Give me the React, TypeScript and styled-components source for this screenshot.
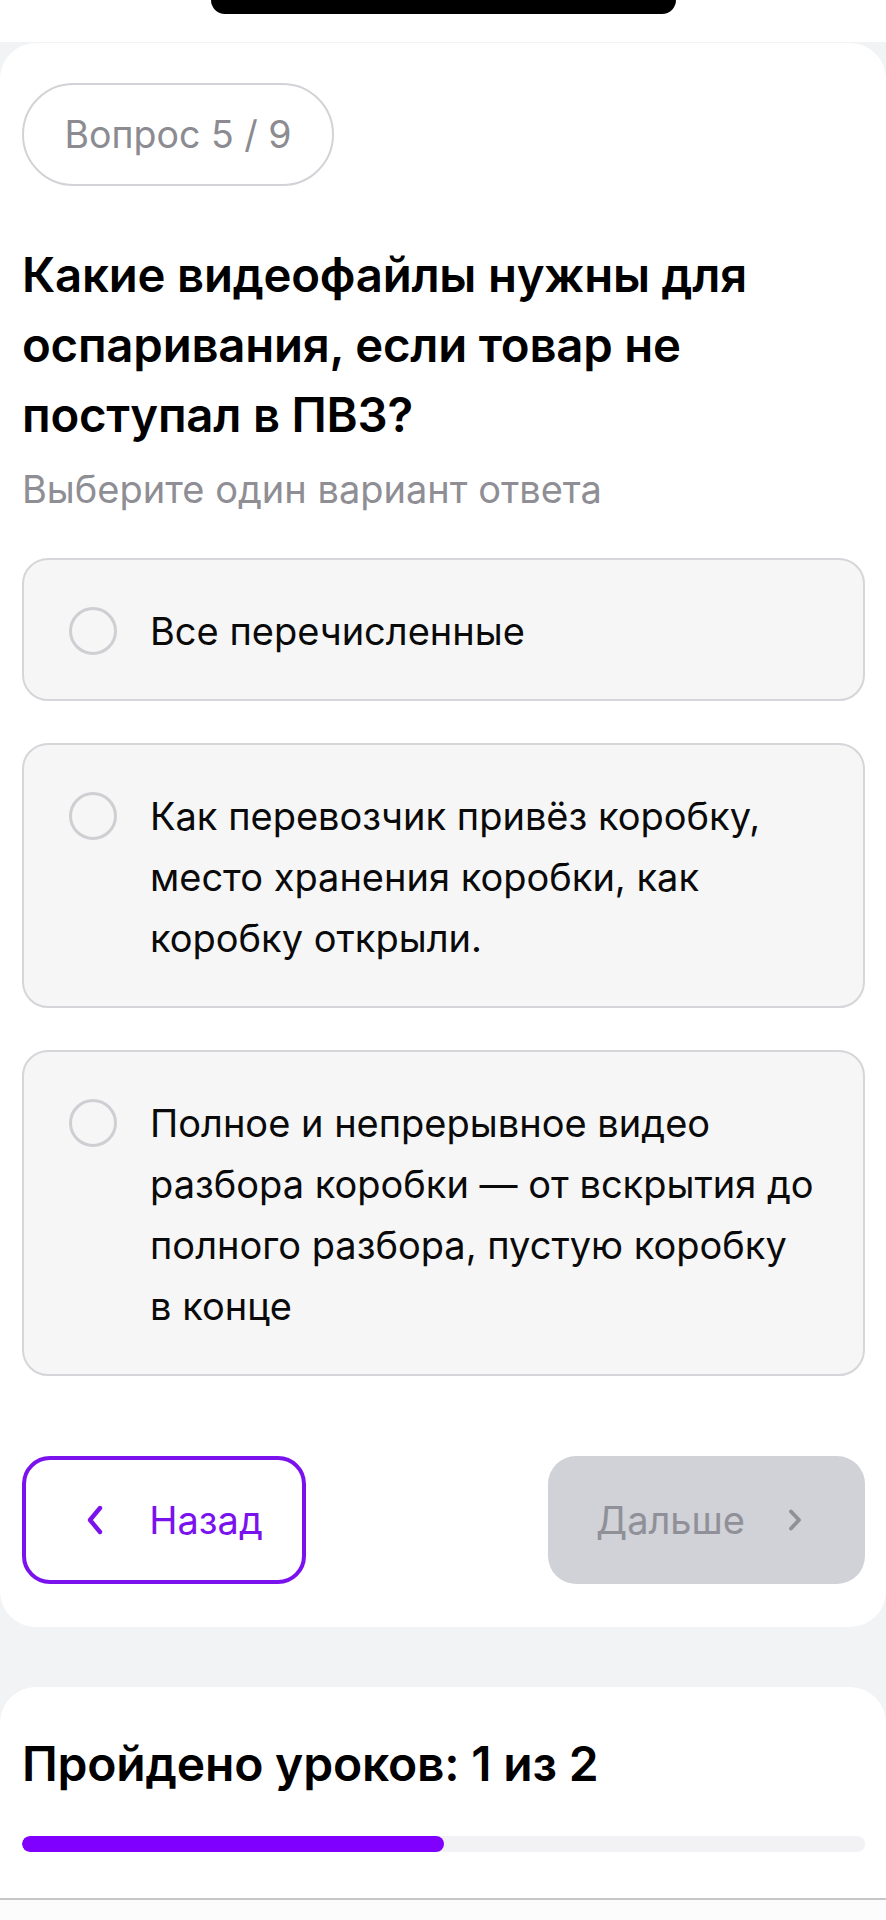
import React from 'react'
import { styled, createGlobalStyle } from 'styled-components'

const GlobalStyle = createGlobalStyle`
  html, body {
    margin: 0;
    padding: 0;
    background: #fcfcfd;
    font-family: Inter, "Noto Sans", "Liberation Sans", sans-serif;
    color: #000;
  }
  * { box-sizing: border-box; }
`

type Option = { id: number; lines: string[] }

const options: Option[] = [
  { id: 1, lines: ['Все перечисленные'] },
  { id: 2, lines: ['Как перевозчик привёз коробку,', 'место хранения коробки, как', 'коробку открыли.'] },
  {
    id: 3,
    lines: [
      'Полное и непрерывное видео',
      'разбора коробки — от вскрытия до',
      'полного разбора, пустую коробку',
      'в конце',
    ],
  },
]

const ChevronLeft = () => (
  <svg width="20" height="32" viewBox="0 0 20 32" fill="none">
    <path d="M15 4L5 16l10 12" stroke="currentColor" strokeWidth="4.4" strokeLinecap="round" strokeLinejoin="round" />
  </svg>
)

const ChevronRight = () => (
  <svg width="16" height="24" viewBox="0 0 16 24" fill="none">
    <path d="M4 3.5l8 8.5-8 8.5" stroke="currentColor" strokeWidth="3.8" strokeLinecap="round" strokeLinejoin="round" />
  </svg>
)

const App = () => {
  const done = 1
  const total = 2
  return (
    <>
      <GlobalStyle />
      <StatusArea>
        <Notch />
      </StatusArea>
      <Page>
        <QuizCard>
          <Counter>Вопрос 5 / 9</Counter>
          <Question>
            Какие видеофайлы нужны для<br />
            оспаривания, если товар не<br />
            поступал в ПВЗ?
          </Question>
          <Hint>Выберите один вариант ответа</Hint>
          <OptionList>
            {options.map((o) => (
              <OptionItem key={o.id}>
                <Radio />
                <OptionText>
                  {o.lines.map((l, i) => (
                    <React.Fragment key={i}>
                      {i > 0 && <br />}
                      {l}
                    </React.Fragment>
                  ))}
                </OptionText>
              </OptionItem>
            ))}
          </OptionList>
          <Actions>
            <BackButton>
              <ChevronLeft />
              Назад
            </BackButton>
            <NextButton disabled>
              Дальше
              <ChevronRight />
            </NextButton>
          </Actions>
        </QuizCard>
        <ProgressCard>
          <ProgressTitle>
            Пройдено уроков: {done} из {total}
          </ProgressTitle>
          <Track>
            <Fill style={{ width: `${(done / total) * 100}%` }} />
          </Track>
        </ProgressCard>
      </Page>
    </>
  )
}

const StatusArea = styled.div`
  height: 42px;
  background: #fff;
  display: flex;
  justify-content: center;
`

const Notch = styled.div`
  width: 465px;
  height: 14px;
  background: #000;
  border-radius: 0 0 18px 18px;
`

const Page = styled.div`
  background: #f2f3f5;
  padding-top: 1px;
  display: flex;
  flex-direction: column;
  gap: 60px;
`

const QuizCard = styled.section`
  background: #fff;
  border-radius: 36px;
  padding: 40px 21px 43px 22px;
  display: flex;
  flex-direction: column;
`

const Counter = styled.div`
  align-self: flex-start;
  width: 312px;
  height: 103px;
  border: 2px solid #d3d3d7;
  border-radius: 52px;
  display: flex;
  align-items: center;
  justify-content: center;
  font-size: 37.5px;
  color: #8b8b91;
`

const Question = styled.h1`
  margin: 54px 0 0;
  font-size: 47.3px;
  line-height: 70px;
  font-weight: 600;
  letter-spacing: -0.2px;
  white-space: nowrap;
`

const Hint = styled.p`
  margin: 14px 0 0;
  font-size: 38px;
  line-height: 50px;
  color: #8e8e94;
`

const OptionList = styled.div`
  margin-top: 44px;
  display: flex;
  flex-direction: column;
  gap: 42px;
`

const OptionItem = styled.div`
  display: flex;
  align-items: flex-start;
  gap: 33px;
  padding: 41px 30px 37px 45px;
  background: #f6f6f7;
  border: 2px solid #d6d6da;
  border-radius: 26px;
`

const Radio = styled.span`
  flex: none;
  width: 48px;
  height: 48px;
  margin-top: 6px;
  border: 3.8px solid #cfcfd3;
  border-radius: 50%;
`

const OptionText = styled.div`
  font-size: 38px;
  line-height: 61px;
  white-space: nowrap;
  color: #0a0a0a;
`

const Actions = styled.div`
  margin-top: 80px;
  display: flex;
  justify-content: space-between;
`

const BaseButton = styled.button`
  height: 128px;
  border-radius: 28px;
  display: flex;
  align-items: center;
  justify-content: center;
  font-family: inherit;
  font-size: 38px;
  padding: 0;
  cursor: pointer;
`

const BackButton = styled(BaseButton)`
  width: 284px;
  gap: 44px;
  padding-left: 20px;
  background: #fff;
  border: 4px solid #7a12ee;
  color: #7a12ee;
`

const NextButton = styled(BaseButton)`
  width: 317px;
  gap: 42px;
  padding-right: 14px;
  background: #d1d1d8;
  border: none;
  color: #909098;
`

const ProgressCard = styled.section`
  background: #fff;
  border-radius: 36px 36px 0 0;
  padding: 47px 21px 46px 22px;
  border-bottom: 2px solid #c6c6c8;
`

const ProgressTitle = styled.h2`
  margin: 0;
  font-size: 48px;
  line-height: 60px;
  font-weight: 600;
  letter-spacing: -0.2px;
`

const Track = styled.div`
  margin-top: 42px;
  height: 16px;
  border-radius: 8px;
  background: #f2f2f4;
  overflow: hidden;
`

const Fill = styled.div`
  height: 100%;
  border-radius: 8px;
  background: #7f00ff;
`

export default App
